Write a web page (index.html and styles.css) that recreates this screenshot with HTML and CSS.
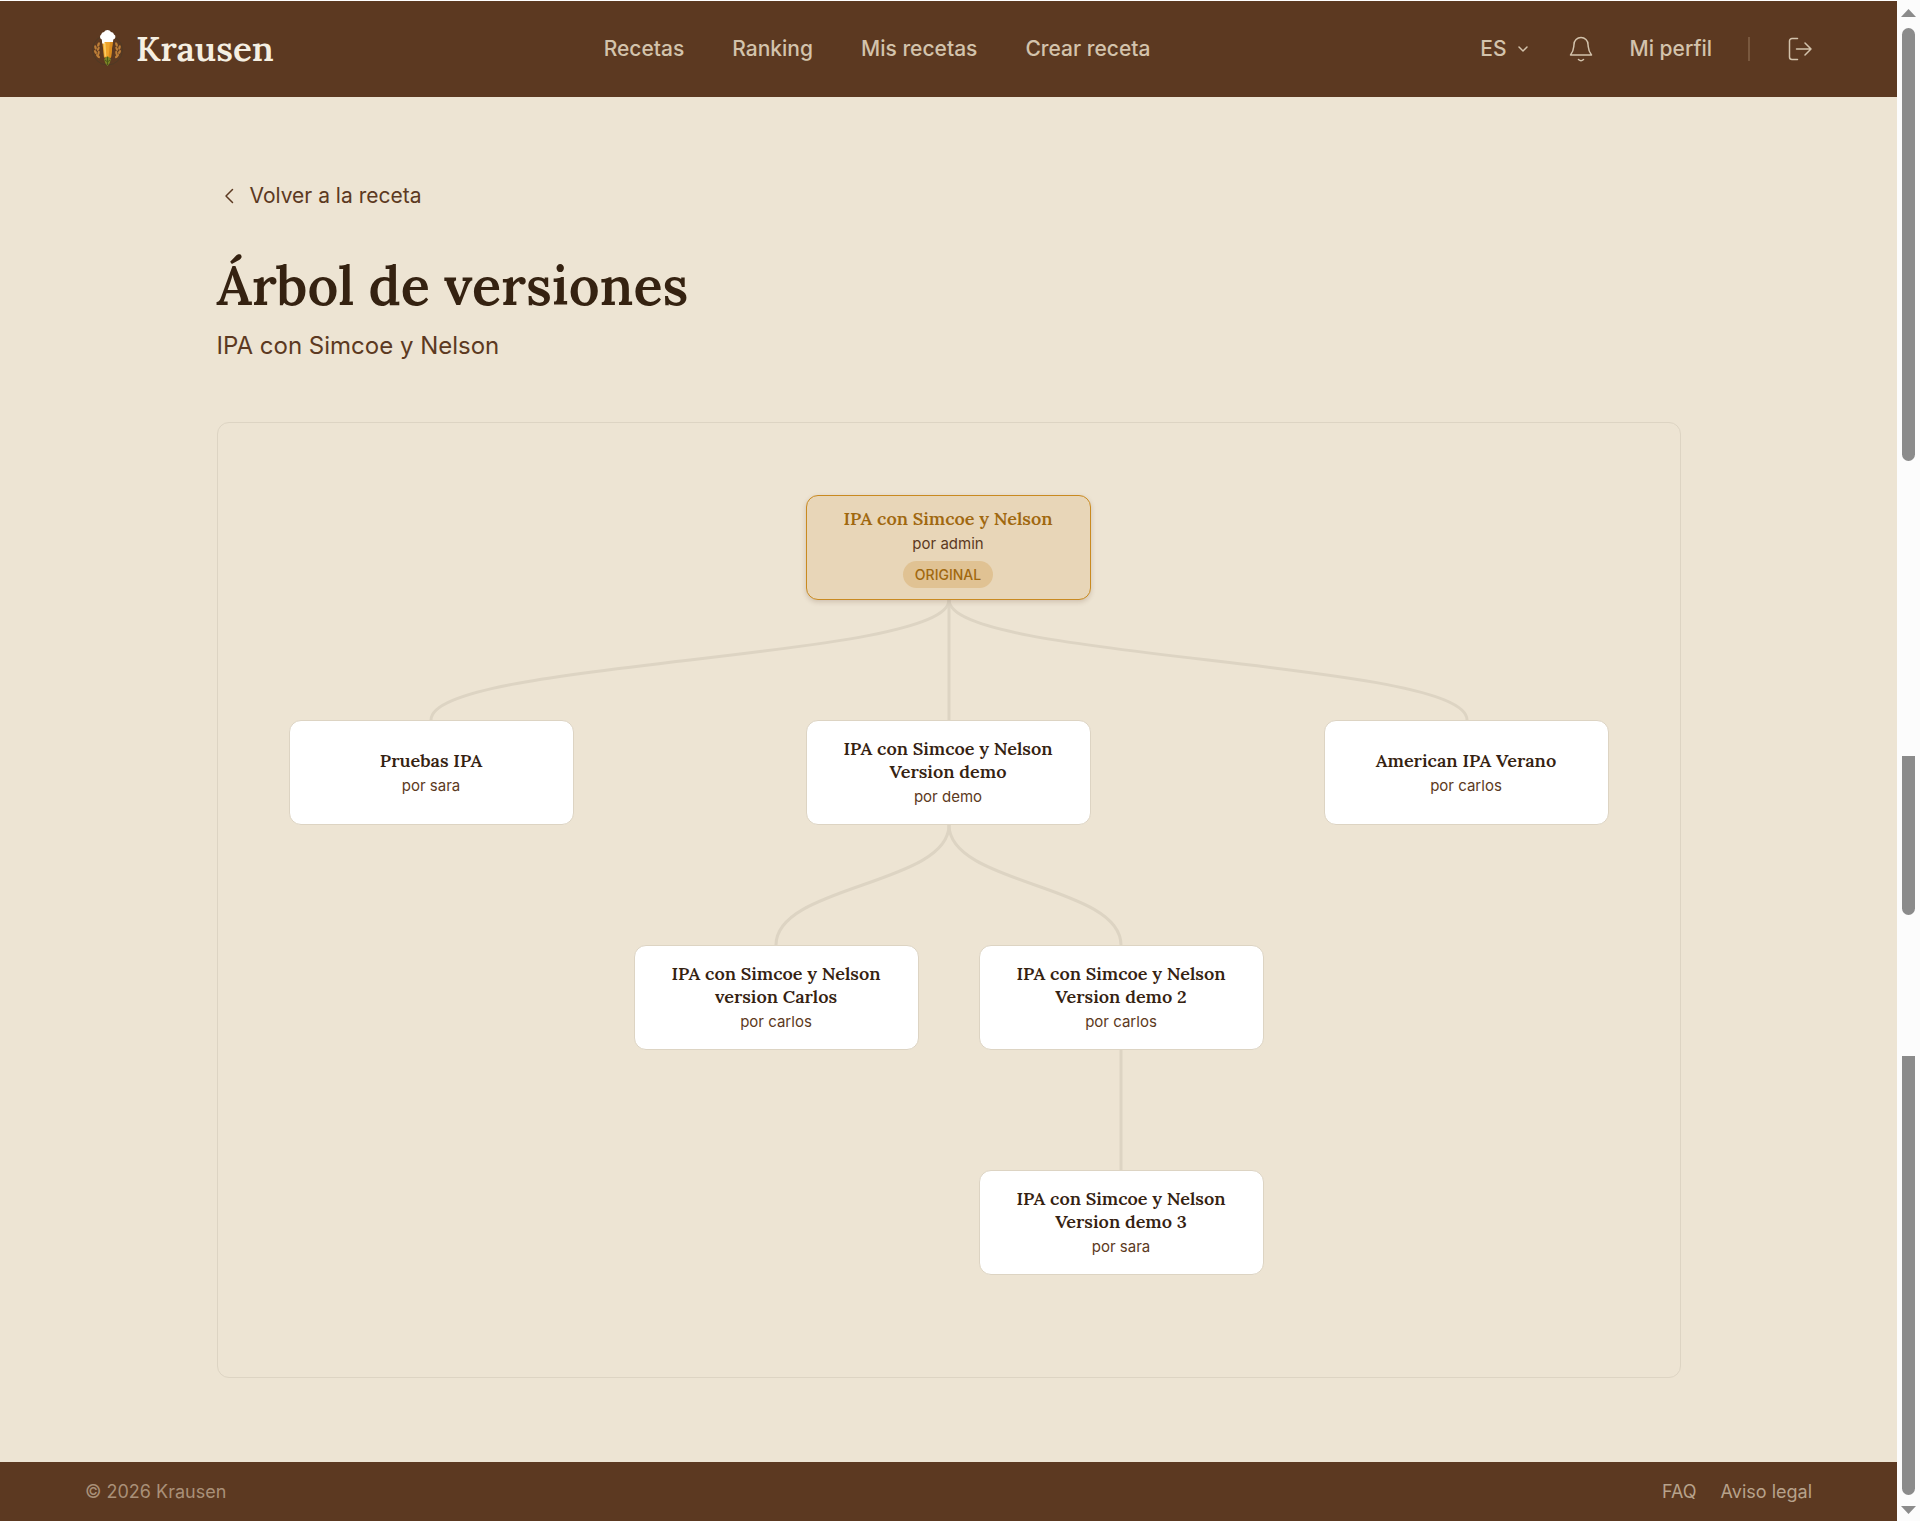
FILE: index.html
```html
<!DOCTYPE html>
<html lang="es">
<head>
<meta charset="utf-8">
<meta name="viewport" content="width=device-width, initial-scale=1">
<title>Árbol de versiones – Krausen</title>
<link rel="stylesheet" href="styles.css">
</head>
<body>
<div class="page">
  <header class="header">
    <a class="brand" href="#">
      <svg class="brand-logo" viewBox="0 0 44 44" aria-hidden="true">
        <circle cx="22.500" cy="23" r="15" fill="none" stroke="#4e3a25" stroke-width="1"/>
        <g fill="#bd7f38">
          <ellipse cx="13.500" cy="17.500" rx="1.200" ry="2.400" transform="rotate(20 13.500 17.500)"/>
          <ellipse cx="10.500" cy="20.500" rx="1.200" ry="2.200" transform="rotate(-15 10.500 20.500)"/>
          <ellipse cx="13.300" cy="21.800" rx="1.100" ry="2.200" transform="rotate(25 13.300 21.800)"/>
          <ellipse cx="10.500" cy="25" rx="1.200" ry="2.200" transform="rotate(-25 10.500 25)"/>
          <ellipse cx="13.600" cy="26" rx="1.100" ry="2.200" transform="rotate(10 13.600 26)"/>
          <ellipse cx="13" cy="29.200" rx="1.200" ry="2.600" transform="rotate(-45 13 29.200)"/>
          <ellipse cx="31.500" cy="17.500" rx="1.200" ry="2.400" transform="rotate(-20 31.500 17.500)"/>
          <ellipse cx="34.500" cy="20.500" rx="1.200" ry="2.200" transform="rotate(15 34.500 20.500)"/>
          <ellipse cx="31.700" cy="21.800" rx="1.100" ry="2.200" transform="rotate(-25 31.700 21.800)"/>
          <ellipse cx="34.500" cy="25" rx="1.200" ry="2.200" transform="rotate(25 34.500 25)"/>
          <ellipse cx="31.400" cy="26" rx="1.100" ry="2.200" transform="rotate(-10 31.400 26)"/>
          <ellipse cx="32" cy="29.200" rx="1.200" ry="2.600" transform="rotate(45 32 29.200)"/>
        </g>
        <path d="M17 12h11l-2 18.500h-7z" fill="#f0a42a"/>
        <path d="M25 15h2.700L26 30.500h-2.500z" fill="#d98a1c"/>
        <path d="M18.500 16h2l.8 13.500h-1.500z" fill="#fbcb62"/>
        <path d="M16.500 9h12L28 15h-8.500v1.500h-2.300z" fill="#fff"/>
        <path d="M17 12.500a2.800 2.800 0 0 1-.8-5A3 3 0 0 1 19 5a4 4 0 0 1 7 0 3 3 0 0 1 3 2.600 2.600 2.600 0 0 1-.8 4.900z" fill="#fff"/>
        <path d="M22.500 29l3.300 3-1 4-2.300 3-2.300-3-1-4z" fill="#7a8426"/>
        <path d="M22.500 30v8M20 33l2.500 2 2.500-2" fill="none" stroke="#4d5a17"/>
      </svg>
      <span class="brand-name">Krausen</span>
    </a>
    <nav class="nav" aria-label="Principal">
      <a href="#">Recetas</a>
      <a href="#">Ranking</a>
      <a href="#">Mis recetas</a>
      <a href="#">Crear receta</a>
    </nav>
    <div class="actions">
      <button class="lang" type="button">ES
        <svg width="10" height="10" viewBox="0 0 10 10" aria-hidden="true"><path d="M1 3l4 4 4-4"/></svg>
      </button>
      <button class="icon-button bell" type="button" aria-label="Notificaciones">
        <svg width="24" height="26" viewBox="0 0 24 26" aria-hidden="true"><path d="M1.500 19C5 15 4.500 12 5 8.500a7 7 0 0 1 14 0C19.500 12 19 15 22.500 19zM9.500 23.500a3.600 3.600 0 0 0 5 0"/></svg>
      </button>
      <a class="profile" href="#">Mi perfil</a>
      <span class="divider"></span>
      <button class="icon-button" type="button" aria-label="Cerrar sesión">
        <svg width="24" height="24" viewBox="0 0 24 24" aria-hidden="true"><path d="M9.500 1.500H4A2.500 2.500 0 0 0 1.500 4v16A2.500 2.500 0 0 0 4 22.500h5.500M8.500 12H23M17 6l6 6-6 6"/></svg>
      </button>
    </div>
  </header>

  <main class="main">
    <a class="back" href="#">
      <svg width="24" height="24" viewBox="0 0 24 24" aria-hidden="true"><path d="M15.500 5.500L9 12l6.500 6.500"/></svg>
      Volver a la receta
    </a>
    <h1>Árbol de versiones</h1>
    <p class="subtitle">IPA con Simcoe y Nelson</p>

    <section class="tree-card" aria-label="Árbol de versiones">
      <div class="tree">
        <svg class="links" viewBox="0 0 1320 780" aria-hidden="true">
          <path d="M660 105C660 165 142 165 142 225"/>
          <path d="M660 105V225"/>
          <path d="M660 105C660 165 1178 165 1178 225"/>
          <path d="M660 330C660 390 487 390 487 450"/>
          <path d="M660 330C660 390 832 390 832 450"/>
          <path d="M832 555V675"/>
        </svg>
        <a class="node node-root" href="#">
          <strong>IPA con Simcoe y Nelson</strong>
          <span class="author">por admin</span>
          <span class="badge">ORIGINAL</span>
        </a>
        <a class="node node-sara" href="#">
          <strong>Pruebas IPA</strong>
          <span class="author">por sara</span>
        </a>
        <a class="node node-demo" href="#">
          <strong>IPA con Simcoe y Nelson Version demo</strong>
          <span class="author">por demo</span>
        </a>
        <a class="node node-verano" href="#">
          <strong>American IPA Verano</strong>
          <span class="author">por carlos</span>
        </a>
        <a class="node node-carlos" href="#">
          <strong>IPA con Simcoe y Nelson version Carlos</strong>
          <span class="author">por carlos</span>
        </a>
        <a class="node node-demo2" href="#">
          <strong>IPA con Simcoe y Nelson Version demo 2</strong>
          <span class="author">por carlos</span>
        </a>
        <a class="node node-demo3" href="#">
          <strong>IPA con Simcoe y Nelson Version demo 3</strong>
          <span class="author">por sara</span>
        </a>
      </div>
    </section>
  </main>

  <footer class="footer">
    <span>© 2026 Krausen</span>
    <nav class="footer-links" aria-label="Legal">
      <a href="#">FAQ</a>
      <a href="#">Aviso legal</a>
    </nav>
  </footer>
</div>
<div class="scrollbar" aria-hidden="true">
  <svg width="15" height="8" viewBox="0 0 15 8"><path d="M0 8L7.500 0 15 8z"/></svg>
  <div class="track">
    <span class="thumb thumb-first"></span>
    <span class="space space-first"></span>
    <span class="thumb thumb-second"></span>
    <span class="space space-second"></span>
    <span class="thumb thumb-third"></span>
  </div>
  <svg width="15" height="8" viewBox="0 0 15 8"><path d="M0 0L7.500 8 15 0z"/></svg>
</div>
</body>
</html>
```
FILE: styles.css
```css
:root {
  --brown: #5c3921;
  --cream: #ede4d3;
  --line: #ddd4c3;
  --amber: #c98a20;
  --serif: Lora, "Liberation Serif", serif;
  --sans: Inter, "Liberation Sans", sans-serif;
}

* {
  box-sizing: border-box;
}

body {
  margin: 0;
  min-height: 100vh;
  display: grid;
  grid-template-columns: minmax(0, 1fr) 23px;
  background: var(--cream);
  color: var(--brown);
  font-family: var(--sans);
  font-size: 21px;
  line-height: 30px;
}

a {
  color: inherit;
  text-decoration: none;
}

button {
  padding: 0;
  border: 0;
  background: none;
  color: inherit;
  font: inherit;
  cursor: pointer;
}

svg {
  display: block;
}

.page {
  display: flex;
  flex-direction: column;
  border-top: 1px solid #fff;
}

/* Header */
.header {
  display: flex;
  align-items: center;
  justify-content: space-between;
  min-height: 96px;
  padding: 0 85px;
  background: var(--brown);
  color: #d3c3ac;
  font-weight: 500;
}

.brand {
  display: flex;
  align-items: center;
  gap: 7px;
  color: #f5efe2;
  font-family: var(--serif);
  font-size: 35px;
  font-weight: 600;
}

.brand-logo {
  width: 44px;
  height: 44px;
}

.nav {
  display: flex;
  gap: 48px;
}

.actions {
  display: flex;
  align-items: center;
}

.actions svg,
.back svg {
  fill: none;
  stroke: currentColor;
  stroke-width: 1.5;
  stroke-linecap: round;
  stroke-linejoin: round;
}

.lang {
  display: flex;
  align-items: center;
  gap: 11px;
  margin-right: 41px;
}

.bell {
  margin-right: 37px;
}

.divider {
  width: 2px;
  height: 24px;
  margin: 0 38px 0 36px;
  background: #79583e;
}

/* Content */
.main {
  flex: 1;
  width: 100%;
  max-width: 1512px;
  margin: 0 auto;
  padding: 84px 24px;
}

.back {
  display: flex;
  align-items: center;
  gap: 9px;
  width: fit-content;
}

h1 {
  margin: 39px 0 0;
  color: #352211;
  font-family: var(--serif);
  font-size: 54px;
  font-weight: 600;
  line-height: 72px;
}

.subtitle {
  margin: 6px 0 58px;
  font-size: 24px;
  line-height: 36px;
}

.tree-card {
  padding: 72px 71px 102px;
  border: 1px solid var(--line);
  border-radius: 12px;
  overflow-x: auto;
}

.tree {
  position: relative;
  width: 1320px;
  height: 780px;
  margin: 0 auto;
}

.links {
  width: 100%;
  height: 100%;
  fill: none;
  stroke: var(--line);
  stroke-width: 3;
}

.node {
  position: absolute;
  display: flex;
  flex-direction: column;
  align-items: center;
  justify-content: center;
  width: 285px;
  height: 105px;
  padding: 0 32px;
  border: 1px solid var(--line);
  border-radius: 12px;
  background: #fff;
  text-align: center;
}

.node strong {
  color: #352211;
  font-family: var(--serif);
  font-size: 18px;
  font-weight: 600;
  line-height: 23px;
}

.author {
  margin-top: 3px;
  font-size: 15px;
  line-height: 22px;
}

.badge {
  margin-top: 6px;
  padding: 0 12px;
  border-radius: 14px;
  background: #e0c293;
  color: #a0680f;
  font-size: 14px;
  font-weight: 500;
  line-height: 27px;
}

.node-root {
  left: 517px;
  top: 0;
  border-color: var(--amber);
  background: #e8d6b8;
  box-shadow: 0 2px 5px rgb(92 57 33 / 20%);
}

.node-root strong {
  color: #a0680f;
}

.node-sara {
  left: 0;
  top: 225px;
}

.node-demo {
  left: 517px;
  top: 225px;
}

.node-verano {
  left: 1035px;
  top: 225px;
}

.node-carlos {
  left: 345px;
  top: 450px;
}

.node-demo2 {
  left: 690px;
  top: 450px;
}

.node-demo3 {
  left: 690px;
  top: 675px;
}

/* Footer */
.footer {
  display: flex;
  align-items: center;
  justify-content: space-between;
  min-height: 59px;
  padding: 0 85px;
  background: var(--brown);
  color: #a99078;
  font-size: 18px;
}

.footer-links {
  display: flex;
  gap: 24px;
  color: #b7a28b;
}

/* Scroll rail */
.scrollbar {
  display: flex;
  flex-direction: column;
  align-items: center;
  gap: 11px;
  padding: 9px 0 7px;
  background: #fcfcfc;
  fill: #8b8b8b;
}

.track {
  display: flex;
  flex: 1;
  flex-direction: column;
  width: 13px;
}

.thumb {
  border-radius: 0 0 7px 7px;
  background: #8b8b8b;
}

.thumb-first {
  flex: 433;
  border-radius: 7px;
}

.space-first {
  flex: 295;
}

.thumb-second {
  flex: 159;
}

.space-second {
  flex: 141;
}

.thumb-third {
  flex: 439;
}
```
